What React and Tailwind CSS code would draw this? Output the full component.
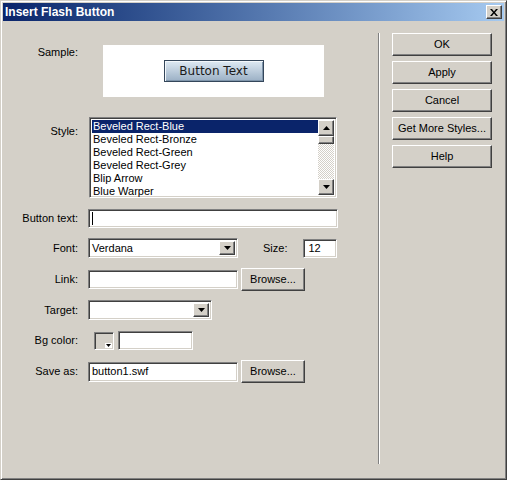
import React from 'react';

const raised = "border border-t-white border-l-white border-r-[#404040] border-b-[#404040] shadow-[inset_-1px_-1px_#808080] bg-[#d4d0c8]";
const sunken = "border border-t-[#808080] border-l-[#808080] border-b-white border-r-white shadow-[inset_1px_1px_#404040,inset_-1px_-1px_#d4d0c8] bg-white";

const DownArrow = () => (
  <svg width="7" height="4" viewBox="0 0 7 4"><path d="M0 0h7L3.5 4z" fill="#000" /></svg>
);
const UpArrow = () => (
  <svg width="7" height="4" viewBox="0 0 7 4"><path d="M0 4h7L3.5 0z" fill="#000" /></svg>
);

const Button = ({ children, className = "" }) => (
  <div className={`${raised} flex items-center justify-center ${className}`}>{children}</div>
);

const Label = ({ children, className = "" }) => (
  <div className={`w-[75px] shrink-0 text-right ${className}`}>{children}</div>
);

const Select = ({ value, width }) => (
  <div className={`${sunken} h-[20px] flex items-center p-[2px] ${width}`}>
    <div className="flex-1 pl-[1px] leading-[13px]">{value}</div>
    <div className={`${raised} w-[16px] h-full flex items-center justify-center`}><DownArrow /></div>
  </div>
);

const styles = ["Beveled Rect-Blue", "Beveled Rect-Bronze", "Beveled Rect-Green", "Beveled Rect-Grey", "Blip Arrow", "Blue Warper"];

export default function App() {
  return (
    <div className="w-[507px] h-[480px] bg-[#d4d0c8] border border-t-[#d4d0c8] border-l-[#d4d0c8] border-r-[#404040] border-b-[#404040] shadow-[inset_1px_1px_white,inset_-1px_-1px_#808080] p-[2px] text-[11px] leading-[13px] text-black font-['Liberation_Sans',Arial,sans-serif] flex flex-col">
      {/* Title bar */}
      <div className="h-[18px] shrink-0 flex items-center justify-between pl-[2px] pr-[2px] bg-gradient-to-r from-[#0a246a] to-[#a6caf0]">
        <span className="text-white font-bold text-[12px]">Insert Flash Button</span>
        <div className={`${raised} w-[16px] h-[14px] flex items-center justify-center`}>
          <svg width="8" height="7" viewBox="0 0 8 7"><path d="M0 0h2l2 2.5L6 0h2L5 3.5 8 7H6L4 4.5 2 7H0l3-3.5z" fill="#000" /></svg>
        </div>
      </div>

      <div className="flex flex-1">
        {/* Form */}
        <div className="w-[375px] shrink-0 flex flex-col">
          <div className="mt-[24px] h-[52px] flex">
            <Label className="pt-[1px]">Sample:</Label>
            <div className="ml-[25px] w-[221px] h-full bg-white flex items-center justify-center">
              <div className="w-[100px] h-[22px] border border-[#34465a] bg-gradient-to-b from-[#dfeaf3] to-[#9bb0c5] flex items-center justify-center text-[12px] text-[#1a1a1a] font-['DejaVu_Sans',Verdana,sans-serif] shadow-[inset_1px_1px_#f4f8fb,inset_-1px_-1px_#7f95ab]">
                Button Text
              </div>
            </div>
          </div>

          <div className="mt-[20px] h-[81px] flex">
            <Label className="pt-[8px]">Style:</Label>
            <div className={`${sunken} ml-[11px] w-[248px] h-full p-[2px] flex`}>
              <div className="flex-1 flex flex-col">
                {styles.map((s, i) => (
                  <div key={s} className={`h-[13px] pl-px whitespace-nowrap ${i === 0 ? "bg-[#0a246a] text-white" : ""}`}>{s}</div>
                ))}
              </div>
              <div className="w-[16px] flex flex-col">
                <Button className="h-[16px] shrink-0"><UpArrow /></Button>
                <Button className="h-[8px] shrink-0" />
                <div className="flex-1 bg-[image:repeating-conic-gradient(#ffffff_0_25%,#d4d0c8_0_50%)] bg-[length:2px_2px]" />
                <Button className="h-[16px] shrink-0"><DownArrow /></Button>
              </div>
            </div>
          </div>

          <div className="mt-[11px] h-[19px] flex items-center">
            <Label>Button text:</Label>
            <div className={`${sunken} ml-[10px] w-[250px] h-full flex items-center pl-[3px]`}>
              <div className="w-px h-[13px] bg-black" />
            </div>
          </div>

          <div className="mt-[10px] h-[20px] flex items-center">
            <Label>Font:</Label>
            <div className="ml-[10px]"><Select value="Verdana" width="w-[150px]" /></div>
            <span className="ml-[25px]">Size:</span>
            <div className={`${sunken} ml-[16px] w-[34px] h-[19px] flex items-center pl-[4px]`}>12</div>
          </div>

          <div className="mt-[10px] h-[23px] flex items-center">
            <Label>Link:</Label>
            <div className={`${sunken} ml-[10px] w-[150px] h-[19px]`} />
            <Button className="ml-[3px] w-[64px] h-[23px]">Browse...</Button>
          </div>

          <div className="mt-[9px] h-[20px] flex items-center">
            <Label>Target:</Label>
            <div className="ml-[10px]"><Select value="" width="w-[124px]" /></div>
          </div>

          <div className="mt-[11px] h-[19px] flex items-center">
            <Label>Bg color:</Label>
            <div className="ml-[16px] w-[20px] h-[18px] border border-t-[#808080] border-l-[#808080] border-b-white border-r-white shadow-[inset_1px_1px_#404040] flex items-end justify-end">
              <div className="w-[7px] h-[5px] bg-white flex items-center justify-center mr-[1px] mb-[1px]">
                <svg width="5" height="3" viewBox="0 0 5 3"><path d="M0 0h5L2.5 3z" fill="#000" /></svg>
              </div>
            </div>
            <div className={`${sunken} ml-[4px] w-[75px] h-[19px]`} />
          </div>

          <div className="mt-[10px] h-[23px] flex items-center">
            <Label>Save as:</Label>
            <div className={`${sunken} ml-[10px] w-[150px] h-[20px] flex items-center pl-[3px]`}>button1.swf</div>
            <Button className="ml-[3px] w-[64px] h-[23px]">Browse...</Button>
          </div>
        </div>

        {/* Separator */}
        <div className="mt-[12px] h-[431px] w-[2px] border-l border-l-[#808080] border-r border-r-white" />

        {/* Buttons */}
        <div className="ml-[12px] mt-[12px] flex flex-col gap-[5px]">
          {["OK", "Apply", "Cancel", "Get More Styles...", "Help"].map((b) => (
            <Button key={b} className="w-[100px] h-[23px]">{b}</Button>
          ))}
        </div>
      </div>
    </div>
  );
}
